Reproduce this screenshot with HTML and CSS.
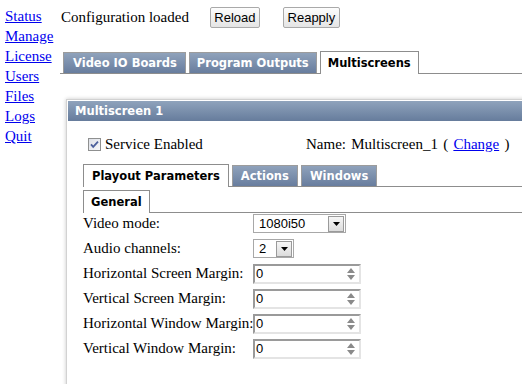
FILE: index.html
```html
<!DOCTYPE html>
<html lang="en">

<head>
  <meta charset="UTF-8" />
  <title>Multiscreens</title>
  <link rel="stylesheet" href="styles.css">
</head>

<body>
  <div class="page">
    <nav class="side">
      <a href="#">Status</a>
      <a href="#">Manage</a>
      <a href="#">License</a>
      <a href="#">Users</a>
      <a href="#">Files</a>
      <a href="#">Logs</a>
      <a href="#">Quit</a>
    </nav>

    <div class="main">
      <div class="toolbar">
        <span>Configuration loaded</span>
        <button class="btn btn-reload">Reload</button>
        <button class="btn btn-reapply">Reapply</button>
      </div>

      <div class="tabs">
        <span class="tab first">Video IO Boards</span>
        <span class="tab">Program Outputs</span>
        <span class="tab active">Multiscreens</span>
      </div>

      <div class="panel">
        <div class="panel-head">Multiscreen 1</div>
        <div class="panel-body">
          <div class="service-row">
            <label class="check">
              <svg width="13" height="13" viewBox="0 0 13 13">
                <defs>
                  <linearGradient id="cb" x1="0" y1="0" x2="1" y2="1">
                    <stop offset="0" stop-color="#dcdfe6" />
                    <stop offset="1" stop-color="#f7f8fa" />
                  </linearGradient>
                </defs>
                <rect x="0.5" y="0.5" width="12" height="12" fill="url(#cb)" stroke="#8f9090" />
                <path d="M3 6.3 L5.2 8.8 L10 3.6" fill="none" stroke="#4b5f9c" stroke-width="1.8" />
              </svg>
              Service Enabled
            </label>
            <span class="name">Name: Multiscreen_1 ( <a href="#">Change</a> )</span>
          </div>

          <div class="tabs inner">
            <span class="tab active">Playout Parameters</span>
            <span class="tab">Actions</span>
            <span class="tab">Windows</span>
          </div>

          <div class="tabs sub">
            <span class="tab active">General</span>
          </div>

          <div class="form">
            <div class="row">
              <span class="label">Video mode:</span>
              <div class="select video">
                <span class="value">1080i50</span>
                <span class="arrow"><svg width="7" height="4" viewBox="0 0 7 4"><path d="M0 0 H7 L3.5 4 Z" fill="#000" /></svg></span>
              </div>
            </div>
            <div class="row">
              <span class="label">Audio channels:</span>
              <div class="select audio">
                <span class="value">2</span>
                <span class="arrow"><svg width="7" height="4" viewBox="0 0 7 4"><path d="M0 0 H7 L3.5 4 Z" fill="#000" /></svg></span>
              </div>
            </div>
            <div class="row">
              <span class="label">Horizontal Screen Margin:</span>
              <div class="spin">
                <span class="value">0</span>
                <svg width="8" height="12" viewBox="0 0 8 12"><path d="M4 0 L8 5 H0 Z M0 7 H8 L4 12 Z" fill="#8a8a8a" /></svg>
              </div>
            </div>
            <div class="row">
              <span class="label">Vertical Screen Margin:</span>
              <div class="spin">
                <span class="value">0</span>
                <svg width="8" height="12" viewBox="0 0 8 12"><path d="M4 0 L8 5 H0 Z M0 7 H8 L4 12 Z" fill="#8a8a8a" /></svg>
              </div>
            </div>
            <div class="row">
              <span class="label">Horizontal Window Margin:</span>
              <div class="spin">
                <span class="value">0</span>
                <svg width="8" height="12" viewBox="0 0 8 12"><path d="M4 0 L8 5 H0 Z M0 7 H8 L4 12 Z" fill="#8a8a8a" /></svg>
              </div>
            </div>
            <div class="row">
              <span class="label">Vertical Window Margin:</span>
              <div class="spin">
                <span class="value">0</span>
                <svg width="8" height="12" viewBox="0 0 8 12"><path d="M4 0 L8 5 H0 Z M0 7 H8 L4 12 Z" fill="#8a8a8a" /></svg>
              </div>
            </div>
          </div>
        </div>
      </div>
    </div>
  </div>
</body>

</html>
```

FILE: styles.css
```css
* {
  box-sizing: border-box;
}

html,
body {
  margin: 0;
  overflow: hidden;
}

body {
  font-family: 'Liberation Serif', 'Times New Roman', serif;
  font-size: 15px;
  color: #000;
  background: #fff;
  width: 522px;
  height: 384px;
}

.page {
  display: flex;
}

.side {
  display: flex;
  flex-direction: column;
  align-items: flex-start;
  width: 60px;
  flex-shrink: 0;
  padding: 6px 0 0 5px;
  line-height: 20px;
}

.side a,
.service-row a {
  color: #0000ee;
}

.main {
  flex: 1;
  min-width: 0;
}

.toolbar {
  display: flex;
  align-items: center;
  height: 21px;
  margin-top: 7px;
  padding-left: 1px;
}

.btn {
  font-family: 'Liberation Sans', Arial, sans-serif;
  font-size: 13px;
  height: 21px;
  padding: 0;
  color: #000;
  border: 1px solid #a9a9a9;
  border-radius: 2px;
  background: linear-gradient(#fdfdfd, #e4e4e4);
}

.btn-reload {
  width: 50px;
  margin-left: 21px;
}

.btn-reapply {
  width: 57px;
  margin-left: 23px;
}

/* tab bars */
.tabs {
  display: flex;
  align-items: flex-end;
  gap: 3px;
  margin-top: 23px;
  padding-left: 3px;
  border-bottom: 1px solid #8d8d8d;
}

.tab {
  font-family: 'DejaVu Sans', Verdana, sans-serif;
  font-weight: bold;
  font-size: 11.5px;
  height: 21px;
  line-height: 20px;
  padding: 0 7px;
  color: #fff;
  white-space: nowrap;
  background: linear-gradient(#8fa2bb, #687d9e);
  border: 1px solid #9c9c9c;
  border-bottom: 0;
}

.tab.first {
  padding: 0 8px 0 9px;
}

.tab.active {
  height: 23px;
  line-height: 22px;
  margin-bottom: -1px;
  color: #000;
  background: #fff;
  border-color: #8d8d8d;
}

.tabs.inner {
  margin-top: 10px;
  padding-left: 0;
}

.tabs.inner .tab {
  padding: 0 8px;
}

.tabs.sub {
  margin-top: 3px;
  padding-left: 0;
}

/* multiscreen panel */
.panel {
  width: 480px;
  height: 300px;
  margin: 25px 0 0 6px;
  padding: 1px;
  border: 1px solid #d2d2d2;
  box-shadow: 0 0 4px rgba(0, 0, 0, 0.22);
}

.panel-head {
  height: 20px;
  line-height: 20px;
  padding-left: 7px;
  font-family: 'DejaVu Sans', Verdana, sans-serif;
  font-weight: bold;
  font-size: 11.5px;
  color: #fff;
  background: linear-gradient(#8fa3bc, #667c9c);
}

.panel-body {
  padding-left: 15px;
}

.service-row {
  display: grid;
  grid-template-columns: 218px auto;
  padding: 13px 0 0 5px;
  line-height: 20px;
}

.name {
  word-spacing: 1.5px;
}

.check {
  display: flex;
  align-items: center;
  gap: 4px;
}

/* form rows */
.form {
  margin-top: -2px;
}

.row {
  display: grid;
  grid-template-columns: 170px auto;
  align-items: center;
  height: 25px;
}

.label {
  white-space: nowrap;
}

.select,
.spin {
  display: flex;
  align-items: center;
  font-family: 'Liberation Sans', Arial, sans-serif;
  font-size: 13px;
}

.select {
  height: 19px;
  border: 1px solid #a8a8a8;
}

.select.video {
  width: 93px;
}

.select.audio {
  width: 41px;
}

.select .value {
  flex: 1;
  padding-left: 5px;
}

.arrow {
  display: flex;
  align-items: center;
  justify-content: center;
  width: 16px;
  height: 16px;
  margin-right: 1px;
  border: 1px solid #9a9a9a;
  background: linear-gradient(#f6f6f6, #dcdcdc);
}

.spin {
  width: 108px;
  height: 20px;
  border: 2px solid;
  border-color: #9a9a9a #e4e4e4 #e4e4e4 #9a9a9a;
  padding-right: 4px;
}

.spin .value {
  flex: 1;
  padding-left: 1px;
}
```
